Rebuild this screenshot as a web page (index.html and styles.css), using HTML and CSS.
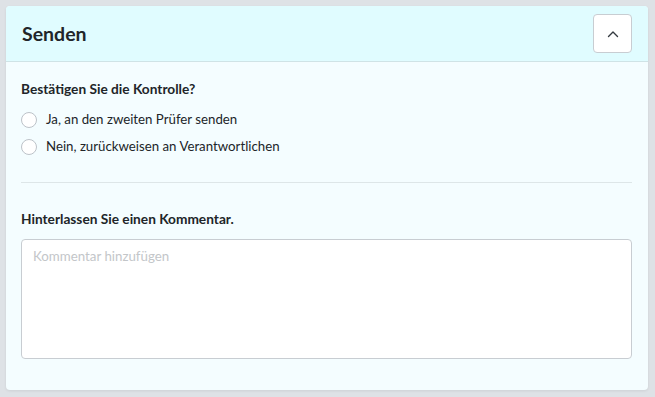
FILE: index.html
```html
<!DOCTYPE html>
<html lang="de">
<head>
    <meta charset="UTF-8">
    <meta name="viewport" content="width=device-width, initial-scale=1.0">
    <title>Senden</title>
    <link rel="stylesheet" href="styles.css">
</head>
<body>

    <div class="card">
        <div class="card-header">
            <h2 class="card-title">Senden</h2>
            <button class="collapse-btn" type="button" aria-label="Einklappen">
                <svg width="14" height="14" viewBox="0 0 14 14" fill="none" stroke="#343a40" stroke-width="1.4" stroke-linecap="round" stroke-linejoin="round">
                    <polyline points="2.5,9.5 7,5 11.5,9.5"/>
                </svg>
            </button>
        </div>

        <div class="card-body">
            <p class="field-label">Bestätigen Sie die Kontrolle?</p>
            <label class="radio-row">
                <input type="radio" name="decision" value="yes">
                <span>Ja, an den zweiten Prüfer senden</span>
            </label>
            <label class="radio-row">
                <input type="radio" name="decision" value="no">
                <span>Nein, zurückweisen an Verantwortlichen</span>
            </label>

            <hr class="divider">

            <p class="field-label comment-label">Hinterlassen Sie einen Kommentar.</p>
            <textarea class="comment" placeholder="Kommentar hinzufügen"></textarea>
        </div>
    </div>

</body>
</html>
```

FILE: styles.css
```css
* {
    box-sizing: border-box;
}

body {
    margin: 0;
    padding: 6px 7px 8px 6px;
    background-color: #dee2e6;
    font-family: Lato, "Open Sans", sans-serif;
    font-size: 13.25px;
    color: #212529;
}

.card {
    background-color: #f4fdff;
    border-radius: 4px;
    box-shadow: 0 1px 3px rgba(0, 0, 0, 0.08);
    overflow: hidden;
}

.card-header {
    display: flex;
    justify-content: space-between;
    align-items: center;
    height: 56px;
    padding: 0 16px 0 16px;
    background-color: #e0fcff;
    border-bottom: 1px solid #cfe3e6;
}

.card-title {
    margin: 0;
    font-size: 19.5px;
    font-weight: 700;
    color: #212529;
}

.collapse-btn {
    width: 39px;
    height: 39px;
    display: flex;
    align-items: center;
    justify-content: center;
    padding: 0;
    background-color: #fff;
    border: 1px solid #c8cdd2;
    border-radius: 4px;
    cursor: pointer;
}

.card-body {
    padding: 16px 16px 31px 15px;
}

.field-label {
    margin: 0 0 7px 0;
    font-size: 13.7px;
    font-weight: 700;
    line-height: 21px;
}

.radio-row {
    display: flex;
    align-items: center;
    gap: 9px;
    height: 27px;
    line-height: 21px;
    cursor: pointer;
}

.radio-row input {
    appearance: none;
    -webkit-appearance: none;
    width: 16px;
    height: 16px;
    margin: 0;
    border: 1px solid #bcc2c8;
    border-radius: 50%;
    background-color: #fff;
}

.divider {
    margin: 22px 0 25px 0;
    border: none;
    border-top: 1px solid #dde6e8;
}

.comment-label {
    margin-bottom: 10px;
}

.comment {
    display: block;
    width: 100%;
    height: 120px;
    padding: 6px 11px;
    border: 1px solid #c8cdd2;
    border-radius: 4px;
    background-color: #fff;
    font-family: inherit;
    font-size: 13.3px;
    line-height: 21px;
    resize: none;
}

.comment::placeholder {
    color: #c3c6c9;
}
```
